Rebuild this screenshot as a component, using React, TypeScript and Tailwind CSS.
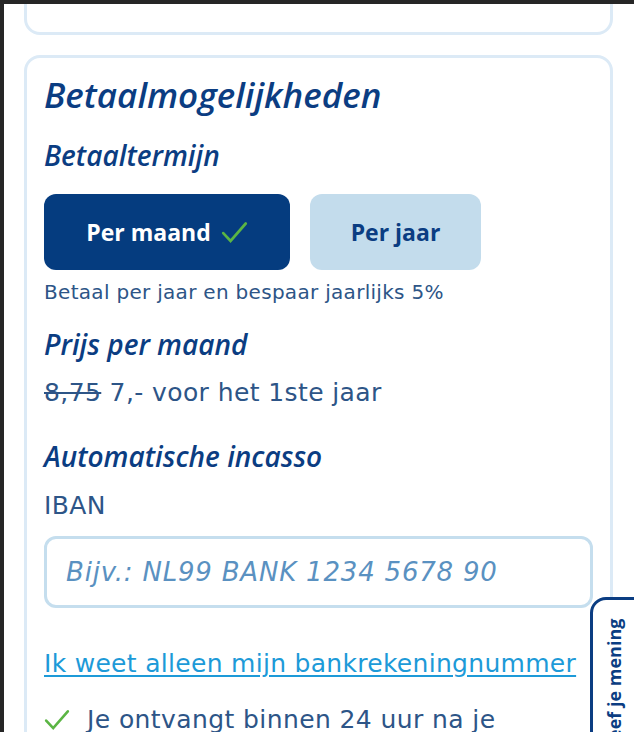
import React from "react";

const heading = "font-['Open_Sans',sans-serif] italic font-semibold text-[#0b3d82]";
const body = "font-['DejaVu_Sans',Verdana,sans-serif] text-[#2d5587]";

const Check = ({ className }: { className?: string }) => (
  <svg viewBox="0 0 24 24" className={className} fill="none" stroke="currentColor" strokeWidth="2.4" strokeLinecap="round">
    <path d="M2 12.5l6.5 7L22 4" />
  </svg>
);

const App = () => {
  return (
    <div className="w-[634px] h-[732px] overflow-hidden bg-[#262626] pt-1 pl-1">
      <div className="relative h-full bg-white overflow-hidden">
        <div className="pl-5 pr-[21px]">
          {/* previous card */}
          <div className="-mt-[30px] h-[61px] rounded-[16px] border-[3px] border-[#dceaf6]" />

          {/* Betaalmogelijkheden */}
          <section className="mt-5 rounded-[16px] border-[3px] border-[#dceaf6] px-[17px] pt-4 pb-10">
            <h2 className={`${heading} text-[35px] leading-[42px]`}>Betaalmogelijkheden</h2>

            <h3 className={`${heading} text-[28px] leading-[34px] mt-[22px]`}>Betaaltermijn</h3>

            <div className="flex gap-5 mt-[22px]">
              <button className="flex items-center justify-center gap-[10px] w-[246px] h-[76px] rounded-[12px] bg-[#053c7f] text-white font-['Open_Sans',sans-serif] font-bold text-[23px]">
                Per maand
                <Check className="w-[27px] h-[27px] text-[#5bb544]" />
              </button>
              <button className="w-[171px] h-[76px] rounded-[12px] bg-[#c3dcec] text-[#0b3d82] font-['Open_Sans',sans-serif] font-bold text-[23px]">
                Per jaar
              </button>
            </div>
            <p className={`${body} text-[20px] leading-[24px] tracking-[0.3px] mt-[10px]`}>Betaal per jaar en bespaar jaarlijks 5%</p>

            <h3 className={`${heading} text-[28px] leading-[34px] mt-[23px]`}>Prijs per maand</h3>
            <p className={`${body} text-[25px] leading-[32px] tracking-[0.4px] mt-4`}>
              <span className="line-through">8,75</span> 7,- voor het 1ste jaar
            </p>

            <h3 className={`${heading} text-[28px] leading-[34px] mt-[30px]`}>Automatische incasso</h3>
            <p className={`${body} text-[25px] leading-[32px] tracking-[0.4px] mt-[17px]`}>IBAN</p>

            <input
              className="mt-[14px] w-full h-[72px] rounded-[12px] border-[3px] border-[#c5deee] px-[19px] font-['DejaVu_Sans',Verdana,sans-serif] italic text-[26px] tracking-[0.8px] text-[#2d5587] placeholder:text-[#5a91c1] outline-none"
              placeholder="Bijv.: NL99 BANK 1234 5678 90"
            />

            <a href="#" className="block mt-10 font-['DejaVu_Sans',Verdana,sans-serif] text-[25px] leading-[32px] tracking-[0.3px] text-[#1d9ad8] underline underline-offset-[3px]">
              Ik weet alleen mijn bankrekeningnummer
            </a>

            <div className={`flex items-center gap-[17px] mt-6 ${body} text-[25px] leading-[32px] tracking-[0.4px]`}>
              <Check className="w-[26px] h-[26px] text-[#5bb544] shrink-0" />
              Je ontvangt binnen 24 uur na je
            </div>
          </section>
        </div>

        {/* feedback tab */}
        <div className="absolute left-[586px] top-[593px] w-[60px] h-[200px] rounded-tl-[16px] border-[3px] border-[#0b3d82] bg-white">
          <span className="absolute left-[9px] top-[153px] origin-top-left -rotate-90 whitespace-nowrap font-['Open_Sans',sans-serif] font-bold text-[18px] leading-[24px] text-[#0b3d82]">
            Geef je mening
          </span>
        </div>
      </div>
    </div>
  );
};

export default App;
